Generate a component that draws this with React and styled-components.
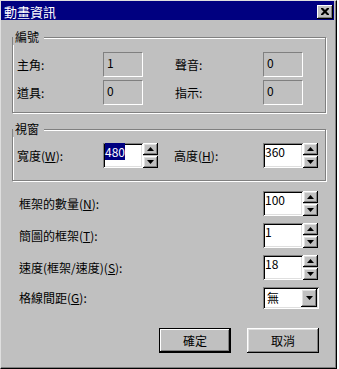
import React from 'react';
import styled, { createGlobalStyle } from 'styled-components';

const GlobalStyle = createGlobalStyle`
  html, body {
    margin: 0;
    padding: 0;
    background: #ffffff;
  }
  body {
    font-family: "Noto Sans CJK TC", "Noto Sans", sans-serif;
    font-size: 12px;
    color: #000;
  }
  * {
    box-sizing: border-box;
  }
`;

const Window = styled.div`
  width: 337px;
  height: 369px;
  background: #c0c0c0;
  border-top: 1px solid #dfdfdf;
  border-left: 1px solid #dfdfdf;
  border-right: 1px solid #000;
  border-bottom: 1px solid #000;
  box-shadow: inset -1px -1px #808080;
  display: flex;
  flex-direction: column;
`;

const TitleBar = styled.div`
  height: 19px;
  margin-right: 2px;
  background: #000080;
  display: flex;
  align-items: flex-start;
  justify-content: space-between;
  padding: 0 1px 0 3px;
`;

const Title = styled.span`
  color: #fff;
  font-size: 13px;
  line-height: 19px;
  padding-top: 1px;
`;

const CloseButton = styled.div`
  width: 16px;
  height: 14px;
  margin-top: 4px;
  background: #c0c0c0;
  box-shadow: inset -1px -1px #000, inset 1px 1px #fff, inset -2px -2px #808080;
  display: flex;
  align-items: center;
  justify-content: center;
  padding-bottom: 1px;
`;

const Body = styled.div`
  padding: 17px 0 0 11px;
  display: flex;
  flex-direction: column;
`;

const Group = styled.div`
  position: relative;
  width: 314px;
  height: ${p => p.$h}px;
  margin-top: ${p => p.$top || 0}px;
  border: 1px solid #808080;
  box-shadow: inset 1px 1px #fff, 1px 1px #fff;
  padding: ${p => p.$pt}px 0 0 4px;
  display: flex;
  flex-direction: column;
  gap: 3px;
`;

const GroupLabel = styled.span`
  position: absolute;
  top: -9px;
  left: 0;
  padding: 0 5px 0 2px;
  background: #c0c0c0;
  line-height: 16px;
`;

const Row = styled.div`
  display: flex;
  align-items: center;
  gap: ${p => p.$gap || 0}px;
`;

const Pair = styled.div`
  display: flex;
  align-items: center;
`;

const Label = styled.span`
  width: ${p => p.$w}px;
  white-space: nowrap;
  line-height: 16px;

  u {
    text-decoration: underline;
    text-underline-offset: 1px;
  }
`;

const StaticField = styled.div`
  width: 40px;
  height: 25px;
  border: 1px solid;
  border-color: #808080 #fff #fff #808080;
  padding: 2px 0 0 3px;
  line-height: 16px;
`;

const Edit = styled.div`
  width: 40px;
  height: 25px;
  background: #fff;
  box-shadow: inset 1px 1px #808080, inset -1px -1px #fff, inset 2px 2px #000, inset -2px -2px #dfdfdf;
  padding: 2px 0 0 2px;
  line-height: 14px;
  white-space: nowrap;
`;

const Selected = styled.span`
  background: #000080;
  color: #fff;
`;

const Spinner = styled.div`
  width: 15px;
  height: 25px;
  display: flex;
  flex-direction: column;
  justify-content: space-between;
`;

const RaisedButton = styled.div`
  background: #c0c0c0;
  box-shadow: inset -1px -1px #000, inset 1px 1px #fff, inset -2px -2px #808080, inset 2px 2px #dfdfdf;
  display: flex;
  align-items: center;
  justify-content: center;
`;

const SpinButton = styled(RaisedButton)`
  height: 12px;
`;

const Standalone = styled.div`
  margin: 10px 0 0 7px;
  display: flex;
  flex-direction: column;
  gap: 7px;
`;

const Combo = styled.div`
  width: 56px;
  height: 22px;
  background: #fff;
  box-shadow: inset 1px 1px #808080, inset -1px -1px #fff, inset 2px 2px #000, inset -2px -2px #dfdfdf;
  display: flex;
  align-items: center;
  justify-content: space-between;
  padding: 2px 2px 2px 4px;
  line-height: 14px;
`;

const ComboButton = styled(RaisedButton)`
  width: 16px;
  height: 18px;
`;

const ButtonRow = styled.div`
  display: flex;
  gap: 16px;
  margin: 19px 0 0 147px;
`;

const PushButton = styled.div`
  width: 72px;
  height: 25px;
  background: #c0c0c0;
  display: flex;
  align-items: center;
  justify-content: center;
  line-height: 16px;
  box-shadow: ${p => p.$default
    ? 'inset 0 0 0 1px #000, inset -2px -2px #000, inset 2px 2px #fff, inset -3px -3px #808080'
    : 'inset -1px -1px #000, inset 1px 1px #fff, inset -2px -2px #808080, inset 2px 2px #dfdfdf'};
`;

const Arrow = ({ up }) => (
  <svg width="7" height="4" viewBox="0 0 7 4">
    <polygon points={up ? '3.5,0 7,4 0,4' : '0,0 7,0 3.5,4'} fill="#000" />
  </svg>
);

const SpinEdit = ({ value, selected }) => (
  <Pair>
    <Edit>{selected ? <Selected>{value}</Selected> : value}</Edit>
    <Spinner>
      <SpinButton><Arrow up /></SpinButton>
      <SpinButton><Arrow /></SpinButton>
    </Spinner>
  </Pair>
);

const Accel = ({ text, letter }) => (
  <>
    {text}(<u>{letter}</u>):
  </>
);

const rows = [
  { text: '框架的數量', letter: 'N', value: '100' },
  { text: '簡圖的框架', letter: 'T', value: '1' },
  { text: '速度(框架/速度)', letter: 'S', value: '18' },
];

const App = () => (
  <>
    <GlobalStyle />
    <Window>
      <TitleBar>
        <Title>動畫資訊</Title>
        <CloseButton>
          <svg width="8" height="7" viewBox="0 0 8 7">
            <path d="M0 0h2l2 2 2-2h2v1L5.5 3.5 8 6v1H6L4 5 2 7H0V6l2.5-2.5L0 1z" fill="#000" />
          </svg>
        </CloseButton>
      </TitleBar>
      <Body>
        <Group $h={76} $pt={14}>
          <GroupLabel>編號</GroupLabel>
          <Row $gap={32}>
            <Pair><Label $w={86}>主角:</Label><StaticField>1</StaticField></Pair>
            <Pair><Label $w={88}>聲音:</Label><StaticField>0</StaticField></Pair>
          </Row>
          <Row $gap={32}>
            <Pair><Label $w={86}>道具:</Label><StaticField>0</StaticField></Pair>
            <Pair><Label $w={88}>指示:</Label><StaticField>0</StaticField></Pair>
          </Row>
        </Group>
        <Group $h={52} $pt={13} $top={16}>
          <GroupLabel>視窗</GroupLabel>
          <Row $gap={16}>
            <Pair><Label $w={86}><Accel text="寬度" letter="W" /></Label><SpinEdit value="480" selected /></Pair>
            <Pair><Label $w={89}><Accel text="高度" letter="H" /></Label><SpinEdit value="360" /></Pair>
          </Row>
        </Group>
        <Standalone>
          {rows.map(r => (
            <Row key={r.letter}>
              <Label $w={244}><Accel text={r.text} letter={r.letter} /></Label>
              <SpinEdit value={r.value} />
            </Row>
          ))}
          <Row>
            <Label $w={244}><Accel text="格線間距" letter="G" /></Label>
            <Combo>
              <span>無</span>
              <ComboButton><Arrow /></ComboButton>
            </Combo>
          </Row>
        </Standalone>
        <ButtonRow>
          <PushButton $default>確定</PushButton>
          <PushButton>取消</PushButton>
        </ButtonRow>
      </Body>
    </Window>
  </>
);

export default App;
